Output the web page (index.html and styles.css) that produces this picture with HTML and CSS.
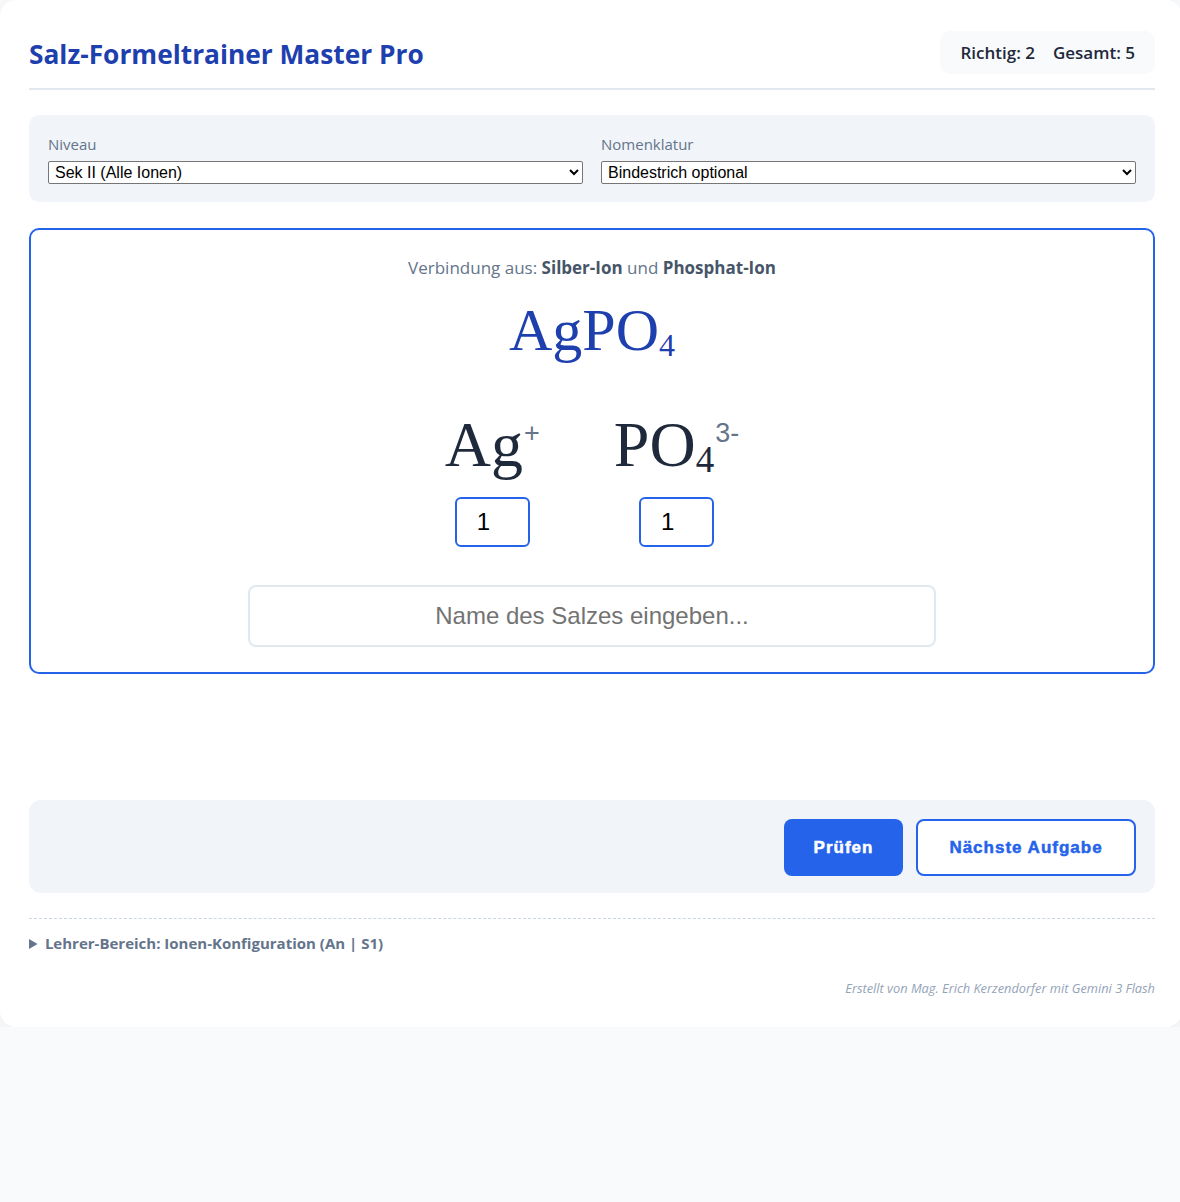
FILE: index.html
```html
<!DOCTYPE html>
<html lang="de">
<head>
    <meta charset="UTF-8">
    <meta name="viewport" content="width=device-width, initial-scale=1.0">
    <title>Salz-Formeltrainer Master Pro</title>
    <link rel="stylesheet" href="styles.css">
</head>
<body>
    <div class="app">
        <div class="header">
            <h1>Salz-Formeltrainer Master Pro</h1>
            <div class="stats">Richtig: <span>2</span><span class="gap"></span>Gesamt: <span>5</span></div>
        </div>

        <div class="settings">
            <div class="field">
                <label for="level">Niveau</label>
                <select id="level">
                    <option>Sek II (Alle Ionen)</option>
                </select>
            </div>
            <div class="field">
                <label for="naming">Nomenklatur</label>
                <select id="naming">
                    <option>Bindestrich optional</option>
                </select>
            </div>
        </div>

        <div class="task">
            <div class="hint">Verbindung aus: <b>Silber-Ion</b> und <b>Phosphat-Ion</b></div>
            <div class="formula">AgPO<sub>4</sub></div>
            <div class="ions">
                <div class="ion">
                    <div class="symbol">Ag<sup>+</sup></div>
                    <input class="count" type="text" value="1">
                </div>
                <div class="ion">
                    <div class="symbol">PO<sub>4</sub><sup>3-</sup></div>
                    <input class="count" type="text" value="1">
                </div>
            </div>
            <input class="name" type="text" placeholder="Name des Salzes eingeben...">
        </div>

        <div class="feedback"></div>

        <div class="actions">
            <button class="btn primary">Prüfen</button>
            <button class="btn outline">Nächste Aufgabe</button>
        </div>

        <details class="teacher">
            <summary>Lehrer-Bereich: Ionen-Konfiguration (An | S1)</summary>
        </details>

        <div class="credit">Erstellt von Mag. Erich Kerzendorfer mit Gemini 3 Flash</div>
    </div>
</body>
</html>
```

FILE: styles.css
```css
body {
    font-family: "Open Sans", "Noto Sans", sans-serif;
    background-color: #f8fafc;
    margin: 0;
    color: #1e293b;
}

.app {
    width: 1126px;
    background: white;
    padding: 30px 27px 30px 29px;
    border-radius: 16px;
    box-shadow: 0 4px 20px rgba(0,0,0,0.06);
}

.header {
    display: flex;
    justify-content: space-between;
    align-items: center;
    padding-bottom: 14px;
    border-bottom: 2px solid #e2e8f0;
    margin-bottom: 25px;
}

h1 {
    margin: 0;
    font-size: 26.3px;
    font-weight: 700;
    color: #1e40af;
    padding-top: 3px;
}

.stats {
    background: #f8fafc;
    border-radius: 10px;
    padding: 10px 20px;
    font-size: 17px;
    font-weight: 600;
    color: #1e293b;
    margin-top: 1px;
}

.stats .gap {
    display: inline-block;
    width: 18px;
}

.settings {
    display: grid;
    grid-template-columns: 1fr 1fr;
    gap: 18px;
    background: #f1f5f9;
    border-radius: 10px;
    padding: 19px 19px 18px 19px;
    margin-bottom: 26px;
}

.field label {
    display: block;
    font-size: 15px;
    color: #64748b;
    margin-bottom: 7px;
}

.field select {
    width: 100%;
    height: 23px;
    font-family: "Liberation Sans", Arial, sans-serif;
    font-size: 16px;
    color: black;
    background: white;
    border: 1px solid #767676;
    border-radius: 2px;
    margin: 0;
    padding: 0 2px;
}

.task {
    border: 2px solid #2563eb;
    border-radius: 10px;
    padding: 26px 20px 25px;
    text-align: center;
}

.hint {
    font-size: 17px;
    color: #64748b;
}

.hint b {
    color: #475569;
}

.formula {
    font-family: "Liberation Serif", "Times New Roman", serif;
    font-size: 60px;
    color: #1e40af;
    line-height: 1;
    margin-top: 21px;
}

.formula sub {
    font-size: 32px;
    line-height: 0;
    vertical-align: -6px;
}

.ions {
    display: flex;
    justify-content: center;
    gap: 74px;
    margin-top: 53px;
}

.ion {
    display: flex;
    flex-direction: column;
    align-items: center;
}

.symbol {
    font-family: "Liberation Serif", "Times New Roman", serif;
    font-size: 64px;
    line-height: 1;
    color: #1e293b;
}

.symbol sup {
    font-family: "Liberation Sans", Arial, sans-serif;
    font-size: 27px;
    line-height: 0;
    color: #64748b;
    vertical-align: 24px;
    margin-left: 1px;
}

.symbol sub {
    font-size: 37px;
    line-height: 0;
    vertical-align: -6px;
}

.count {
    width: 75px;
    height: 50px;
    box-sizing: border-box;
    border: 2px solid #2563eb;
    border-radius: 6px;
    font-family: "Liberation Sans", Arial, sans-serif;
    font-size: 24px;
    padding: 0 20px;
    margin-top: 20px;
    color: black;
}

.name {
    display: block;
    width: 688px;
    height: 62px;
    box-sizing: border-box;
    margin: 38px auto 0;
    border: 2px solid #e2e8f0;
    border-radius: 8px;
    font-family: "Liberation Sans", Arial, sans-serif;
    font-size: 24px;
    text-align: center;
}

.name::placeholder {
    color: #737373;
}

.feedback {
    height: 126px;
}

.actions {
    display: flex;
    justify-content: flex-end;
    gap: 13px;
    background: #f1f5f9;
    border-radius: 12px;
    padding: 19px 19px 17px;
}

.btn {
    height: 57px;
    font-family: "Liberation Sans", Arial, sans-serif;
    font-size: 17px;
    font-weight: 700;
    letter-spacing: 1px;
    -webkit-text-stroke: 0.5px currentColor;
    border-radius: 8px;
    cursor: pointer;
}

.primary {
    width: 119px;
    background-color: #2563eb;
    color: white;
    border: none;
}

.outline {
    width: 220px;
    background: white;
    color: #2563eb;
    border: 2px solid #2563eb;
}

.teacher {
    margin-top: 25px;
    border-top: 1px dashed #cbd5e1;
    padding-top: 14px;
}

.teacher summary {
    font-size: 15px;
    font-weight: 700;
    color: #64748b;
    cursor: pointer;
}

.credit {
    margin-top: 26px;
    text-align: right;
    font-size: 12.8px;
    font-style: italic;
    color: #94a3b8;
}
```
